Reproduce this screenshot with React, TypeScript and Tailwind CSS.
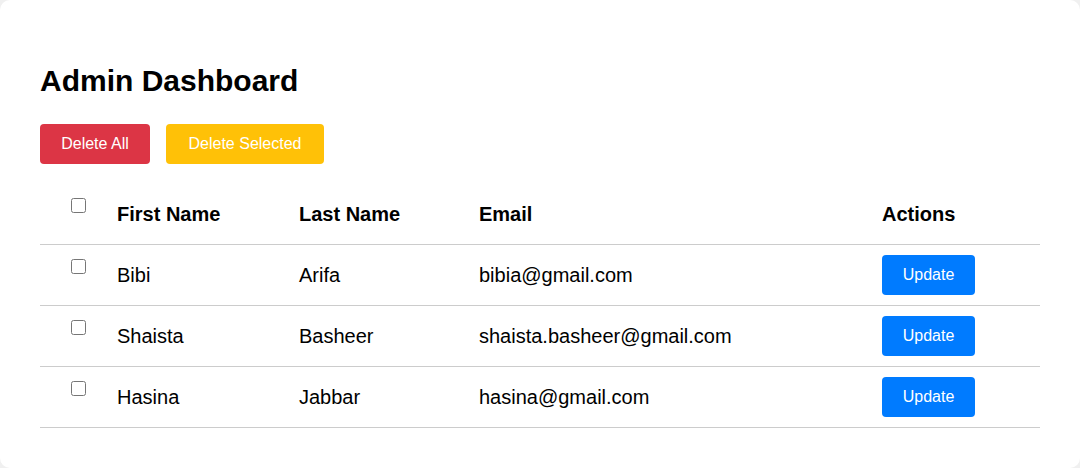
import React from "react";

const users = [
  { first: "Bibi", last: "Arifa", email: "bibia@gmail.com" },
  { first: "Shaista", last: "Basheer", email: "shaista.basheer@gmail.com" },
  { first: "Hasina", last: "Jabbar", email: "hasina@gmail.com" },
];

const cols = "grid grid-cols-[77px_182px_180px_403px_158px] items-center h-[61px] border-b border-[#cccccc]";

export default function App() {
  return (
    <div className="bg-[#f0f0f0] min-h-screen font-['Liberation_Sans',Arial,sans-serif] text-black">
      <div className="bg-white rounded-[10px] px-10 pt-10 pb-10 h-[468px]">
        <h1 className="mt-6 text-[30px] leading-[34px] font-bold">Admin Dashboard</h1>

        <div className="flex gap-4 mt-[26px]">
          <button className="h-10 w-[110px] flex items-center justify-center rounded bg-[#dc3545] text-white text-base">
            Delete All
          </button>
          <button className="h-10 w-[158px] flex items-center justify-center rounded bg-[#ffc107] text-white text-base">
            Delete Selected
          </button>
        </div>

        <div className="mt-5 text-[20px]">
          <div className={cols + " font-bold"}>
            <div className="flex items-center pl-[31px]">
              <input type="checkbox" className="w-[15px] h-[15px] m-0 mb-[18px]" />
            </div>
            <div className="-mt-px">First Name</div>
            <div className="-mt-px">Last Name</div>
            <div className="-mt-px">Email</div>
            <div className="-mt-px">Actions</div>
          </div>
          {users.map((u) => (
            <div key={u.email} className={cols}>
              <div className="flex items-center pl-[31px]">
                <input type="checkbox" className="w-[15px] h-[15px] m-0 mb-[17px]" />
              </div>
              <div className="-mt-px">{u.first}</div>
              <div className="-mt-px">{u.last}</div>
              <div className="-mt-px">{u.email}</div>
              <div>
                <button className="h-10 w-[93px] flex items-center justify-center rounded bg-[#007bff] text-white text-base">
                  Update
                </button>
              </div>
            </div>
          ))}
        </div>
      </div>
    </div>
  );
}
